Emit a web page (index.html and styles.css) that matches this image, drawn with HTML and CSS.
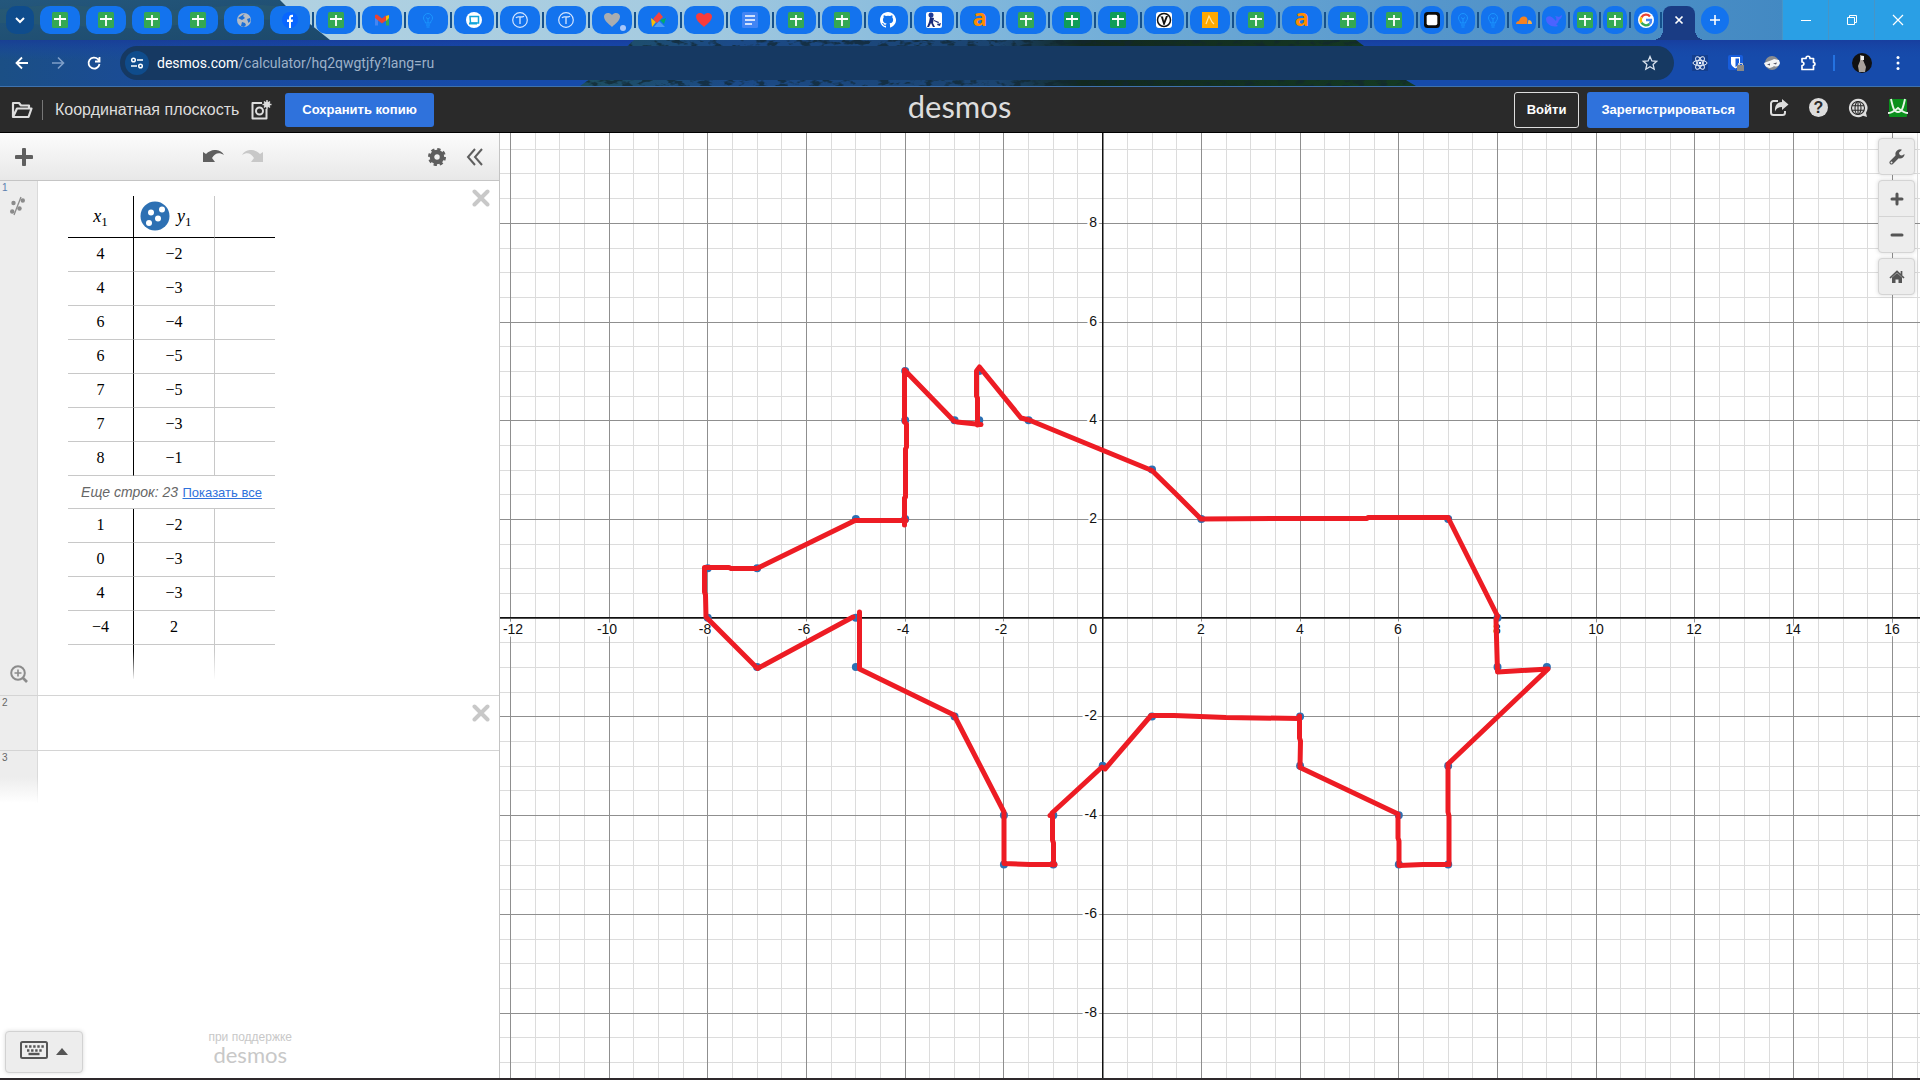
FILE: index.html
```html
<!DOCTYPE html>
<html lang="ru">
<head>
<meta charset="utf-8">
<meta name="viewport" content="width=device-width, initial-scale=1">
<title>Координатная плоскость</title>
<link rel="stylesheet" href="styles.css">
</head>
<body>
<svg class="symbols" aria-hidden="true">
  <symbol id="sheet" viewBox="0 0 16 16"><rect width="16" height="16" rx="1.500" fill="#34a853"/><path d="M2 7h12M8 3v11" stroke="#fff" stroke-width="1.800"/></symbol>
  <symbol id="sheet-dark" viewBox="0 0 16 16"><rect width="16" height="16" rx="1.500" fill="#0f9d58"/><path d="M2 7h12M8 3v11" stroke="#fff" stroke-width="1.800"/></symbol>
  <symbol id="globe" viewBox="0 0 16 16"><circle cx="8" cy="8" r="7" fill="#b4bcc6"/><path d="M9 1.500 7 4l2 2-3 2-4-2M5 14l1-4 3 1 1 2-2 2M11 7l3-1 .5 3-2 2z" fill="#1a6fd8"/></symbol>
  <symbol id="fb" viewBox="0 0 16 16"><circle cx="8" cy="8" r="8" fill="#0866ff"/><path d="M7 16v-6H5V7.500h2V6c0-2.500 1.200-3.600 4-3.300V5c-1.500-.1-2 .1-2 1.200v1.300h2L10.700 10H9v6z" fill="#fff"/></symbol>
  <symbol id="gmail" viewBox="0 0 16 16"><path d="M1 5v8.500h3V7z" fill="#4285f4"/><path d="M15 5v8.500h-3V7z" fill="#34a853"/><path d="M12 4l3-1v3l-3 3z" fill="#fbbc04"/><path d="M1 3l2-.5L8 6.500 12 3.200V8.500L8 11.500 1 6z" fill="#ea4335"/></symbol>
  <symbol id="bulb" viewBox="0 0 16 16"><path d="M5.500 11c0-2-2-2.500-2-5a4.500 4.500 0 0 1 9 0c0 2.500-2 3-2 5zM6 13h4M6.500 15h3M8 11V7L6 5.500M8 7l2-1.500" fill="none" stroke="#1b96ff"/></symbol>
  <symbol id="board" viewBox="0 0 16 16"><circle cx="8" cy="8" r="8" fill="#fff"/><path d="M4 4.500h8.500v6.500H4.500z" fill="#fff" stroke="#12a5dc" stroke-width="1.500"/><path d="M3 11.500h8" stroke="#12a5dc" stroke-width="2"/></symbol>
  <symbol id="tau" viewBox="0 0 16 16"><circle cx="8" cy="8" r="7.300" fill="none" stroke="#d4e5ff" stroke-width="1.200"/><path d="M4 6c1-2 3-1 4-1s3 0 4-.8M8 5v7" fill="none" stroke="#d4e5ff" stroke-width="1.300"/></symbol>
  <symbol id="heart" viewBox="0 0 16 16"><path d="M8 15C5 12 0 9 0 4.500 0 1 5-.500 8 3c3-3.500 8-2 8 1.500C16 9 11 12 8 15z" fill="currentColor"/></symbol>
  <symbol id="diamond" viewBox="0 0 16 16"><path d="M4 15l5-6 6 6z" fill="#4c9bf5"/><path d="M1 6l5 4-4 5z" fill="#fbbc04"/><path d="M16 6l-2 6-4-4z" fill="#00ac68"/><path d="M9 0 3 7l4 4 6-6z" fill="#f4443e"/></symbol>
  <symbol id="docs" viewBox="0 0 16 16"><rect width="16" height="16" rx="1.500" fill="#4285f4"/><path d="M3 4h10M3 8h10M3 12h7" stroke="#fff" stroke-width="1.600"/></symbol>
  <symbol id="github" viewBox="0 0 16 16"><path fill="#fff" d="M8 0C3.580 0 0 3.580 0 8c0 3.540 2.290 6.530 5.470 7.590.4.070.55-.17.55-.38v-1.500c-2.010.37-2.530-.49-2.690-.94-.09-.23-.48-.94-.82-1.130-.28-.15-.68-.52-.01-.53.63-.01 1.080.58 1.230.82.72 1.210 1.870.87 2.330.66.070-.52.28-.87.510-1.070-1.780-.2-3.640-.89-3.640-3.950 0-.87.310-1.590.82-2.150-.08-.2-.36-1.020.08-2.120 0 0 .67-.21 2.200.82a7.400 7.400 0 0 1 4 0c1.530-1.040 2.200-.82 2.200-.82.44 1.100.16 1.920.08 2.120.51.56.82 1.270.82 2.150 0 3.070-1.870 3.750-3.650 3.950.29.25.54.73.54 1.480v2.200c0 .21.15.46.55.38A8 8 0 0 0 8 0z"/></symbol>
  <symbol id="painter" viewBox="0 0 16 16"><rect width="16" height="16" rx="2" fill="#fff"/><circle cx="5" cy="3" r="2.500" fill="#1f3a93"/><path d="M4 5l4 1-1 5 2 4H7l-2-4-2 4H1l2-5zM8 8l5 2-1 2 3-1-1 3-3-1 1-2-4-2z" fill="#1b2c7a"/></symbol>
  <symbol id="vring" viewBox="0 0 16 16"><rect width="16" height="16" rx="3" fill="#fff"/><circle cx="8" cy="8" r="6.500" fill="none" stroke="#111" stroke-width="1.500"/><path d="M3.500 4.500h3.500L8 9l2-5h2L8.500 13h-1L5 5" fill="#111"/></symbol>
  <symbol id="peak" viewBox="0 0 16 16"><rect width="16" height="16" fill="#ffa800"/><path d="M4 12 7 4l3 6 2 2" fill="none" stroke="#ffe3a0" stroke-width="1.200"/></symbol>
  <symbol id="frame" viewBox="0 0 18 18"><rect width="18" height="18" rx="4" fill="#0b0b0b"/><rect x="3" y="3" width="12" height="12" rx="2" fill="#fff"/></symbol>
  <symbol id="cloud" viewBox="0 0 16 16"><path d="M0 12c0-2 1.500-3 3-3C3.500 6 6 4 8.500 4.500 11 5 11.500 7 11.500 8L11 12z" fill="#f6821f"/><path d="M11.500 12 12.500 8c2 0 3.500 1.500 3.500 4z" fill="#fbad41"/></symbol>
  <symbol id="whale" viewBox="0 0 16 16"><path d="M0 7c0-3 4-4 7-1l3 3c1-2 0-4-1-5 2 0 3 1 4 1l3-2c0 3-2 4-3 5-1 3-2 4-3 4l2 2c-6 2-12-2-12-7z" fill="#4b63ff"/></symbol>
  <symbol id="google" viewBox="0 0 16 16"><circle cx="8" cy="8" r="8" fill="#fff"/><g fill="none" stroke-width="2.400"><path d="M12 4.500A5.200 5.200 0 0 0 3.500 5.300" stroke="#ea4335"/><path d="M3.500 5.300a5.200 5.200 0 0 0 0 5.400" stroke="#fbbc04"/><path d="M3.500 10.700A5.200 5.200 0 0 0 11.500 12" stroke="#34a853"/><path d="M11.500 12A5 5 0 0 0 13 8H8" stroke="#4285f4"/></g></symbol>
  <symbol id="cross" viewBox="0 0 18 18"><path d="M2.500 2.500l13 13M15.500 2.500l-13 13" stroke="currentColor" stroke-width="4" stroke-linecap="round"/></symbol>
</svg>

<header class="browser">
  <div class="tab-strip">
    <svg class="wallpaper" viewBox="0 0 1920 40" preserveAspectRatio="none" aria-hidden="true">
      <defs>
        <linearGradient id="sky"><stop offset="0" stop-color="#b9d6e2"/><stop offset=".35" stop-color="#a5cbe0"/><stop offset=".55" stop-color="#78b2da"/><stop offset=".75" stop-color="#5596cb"/><stop offset="1" stop-color="#3c84bf"/></linearGradient>
        <linearGradient id="hill" x2="1" y2="1"><stop offset="0" stop-color="#24577c"/><stop offset="1" stop-color="#1c496b"/></linearGradient>
      </defs>
      <rect width="1920" height="40" fill="url(#sky)"/>
      <path d="M0 0h280l10 10 20 14 20 16H0z" fill="url(#hill)"/>
      <path d="M0 9l60-5 90 8 100-8 35 3 15 13-75-1-80 10-145-6z" fill="#2a5a70" opacity=".6"/>
    </svg>
    <button class="tab tab-search" aria-label="Поиск вкладок"><svg width="12" height="12" viewBox="0 0 12 12"><path d="M2 4l4 4 4-4" fill="none" stroke="#fff" stroke-width="2"/></svg></button>
    <div class="tabs">
      <button class="tab" aria-label="Вкладка"><svg><use href="#sheet"/></svg></button>
      <button class="tab" aria-label="Вкладка"><svg><use href="#sheet"/></svg></button>
      <button class="tab" aria-label="Вкладка"><svg><use href="#sheet"/></svg></button>
      <button class="tab" aria-label="Вкладка"><svg><use href="#sheet"/></svg></button>
      <button class="tab" aria-label="Вкладка"><svg><use href="#globe"/></svg></button>
      <button class="tab" aria-label="Вкладка"><svg><use href="#fb"/></svg></button>
      <button class="tab" aria-label="Вкладка"><svg><use href="#sheet"/></svg></button>
      <button class="tab" aria-label="Вкладка"><svg><use href="#gmail"/></svg></button>
      <button class="tab" aria-label="Вкладка"><svg><use href="#bulb"/></svg></button>
      <button class="tab" aria-label="Вкладка"><svg><use href="#board"/></svg></button>
      <button class="tab" aria-label="Вкладка"><svg><use href="#tau"/></svg></button>
      <button class="tab" aria-label="Вкладка"><svg><use href="#tau"/></svg></button>
      <button class="tab tab-muted" aria-label="Вкладка"><svg><use href="#heart"/></svg></button>
      <button class="tab" aria-label="Вкладка"><svg><use href="#diamond"/></svg></button>
      <button class="tab tab-red" aria-label="Вкладка"><svg><use href="#heart"/></svg></button>
      <button class="tab" aria-label="Вкладка"><svg><use href="#docs"/></svg></button>
      <button class="tab" aria-label="Вкладка"><svg><use href="#sheet"/></svg></button>
      <button class="tab" aria-label="Вкладка"><svg><use href="#sheet"/></svg></button>
      <button class="tab" aria-label="Вкладка"><svg><use href="#github"/></svg></button>
      <button class="tab" aria-label="Вкладка"><svg><use href="#painter"/></svg></button>
      <button class="tab tab-letter" aria-label="Вкладка">a</button>
      <button class="tab" aria-label="Вкладка"><svg><use href="#sheet"/></svg></button>
      <button class="tab" aria-label="Вкладка"><svg><use href="#sheet-dark"/></svg></button>
      <button class="tab" aria-label="Вкладка"><svg><use href="#sheet-dark"/></svg></button>
      <button class="tab" aria-label="Вкладка"><svg><use href="#vring"/></svg></button>
      <button class="tab" aria-label="Вкладка"><svg><use href="#peak"/></svg></button>
      <button class="tab" aria-label="Вкладка"><svg><use href="#sheet"/></svg></button>
      <button class="tab tab-letter" aria-label="Вкладка">a</button>
      <button class="tab" aria-label="Вкладка"><svg><use href="#sheet"/></svg></button>
      <button class="tab" aria-label="Вкладка"><svg><use href="#sheet"/></svg></button>
    </div>
    <div class="tabs tabs-small">
      <button class="tab" aria-label="Вкладка"><svg><use href="#frame"/></svg></button>
      <button class="tab" aria-label="Вкладка"><svg><use href="#bulb"/></svg></button>
      <button class="tab" aria-label="Вкладка"><svg><use href="#bulb"/></svg></button>
      <button class="tab" aria-label="Вкладка"><svg><use href="#cloud"/></svg></button>
      <button class="tab" aria-label="Вкладка"><svg><use href="#whale"/></svg></button>
      <button class="tab" aria-label="Вкладка"><svg><use href="#sheet"/></svg></button>
      <button class="tab" aria-label="Вкладка"><svg><use href="#sheet"/></svg></button>
      <button class="tab" aria-label="Вкладка"><svg><use href="#google"/></svg></button>
    </div>
    <button class="tab-active" aria-label="Закрыть вкладку"><svg width="10" height="10" viewBox="0 0 10 10"><path d="M1.500 1.500l7 7M8.500 1.500l-7 7" stroke="#fff" stroke-width="1.700"/></svg></button>
    <button class="tab tab-new" aria-label="Новая вкладка"><svg width="12" height="12" viewBox="0 0 12 12"><path d="M6 1v10M1 6h10" stroke="#fff" stroke-width="1.600"/></svg></button>
    <div class="window-buttons">
      <button aria-label="Свернуть"><svg viewBox="0 0 12 12"><path d="M1 6.500h10" stroke="#fff"/></svg></button>
      <button aria-label="Развернуть"><svg viewBox="0 0 12 12"><path d="M1.500 3.500h7v7h-7zM3.500 3.500v-2h7v7h-2" fill="none" stroke="#fff"/></svg></button>
      <button aria-label="Закрыть"><svg viewBox="0 0 12 12"><path d="M1 1l10 10M11 1L1 11" stroke="#fff" stroke-width="1.200"/></svg></button>
    </div>
  </div>
  <div class="address-row">
    <svg class="wallpaper" viewBox="0 0 1920 46" preserveAspectRatio="none" aria-hidden="true">
      <defs>
        <linearGradient id="water" x1="0" x2="1"><stop offset="0" stop-color="#1b4f85"/><stop offset=".1" stop-color="#1a4a9c"/><stop offset=".25" stop-color="#164bab"/><stop offset="1" stop-color="#164bab"/></linearGradient>
        <linearGradient id="trees"><stop offset="0" stop-color="#1e4f5e"/><stop offset=".18" stop-color="#1b4a88"/><stop offset=".5" stop-color="#1b4470"/><stop offset=".6" stop-color="#12281f"/><stop offset="1" stop-color="#143a22"/></linearGradient>
        <linearGradient id="shade" x2="0" y2="1"><stop offset="0" stop-color="#18399a" stop-opacity=".7"/><stop offset="1" stop-color="#164bab" stop-opacity="0"/></linearGradient>
        <filter id="leaves" x="0" y="0" width="1" height="1" color-interpolation-filters="sRGB"><feTurbulence type="fractalNoise" baseFrequency=".09 .2" numOctaves="3" seed="4"/><feColorMatrix values="0 0 0 0 .07  0 0 0 0 .15  0 0 0 0 .18  6 0 0 0 -3"/><feComposite in2="SourceGraphic" operator="in"/></filter>
      </defs>
      <rect width="1920" height="46" fill="url(#water)"/>
      <rect width="1920" height="20" fill="url(#shade)"/>
      <path d="M580 46l20-14 34-32h722l16 12 20 20 24 14z" fill="url(#trees)"/>
      <path d="M580 46l20-14 34-32h722l16 12 20 20 24 14z" filter="url(#leaves)" opacity=".7"/>
    </svg>
    <button class="nav" aria-label="Назад"><svg viewBox="0 0 16 16"><path d="M14 8H3M8 2.500 2.500 8 8 13.500" fill="none" stroke="#fff" stroke-width="1.800"/></svg></button>
    <button class="nav" aria-label="Вперёд"><svg viewBox="0 0 16 16"><path d="M2 8h11M8 2.500 13.500 8 8 13.500" fill="none" stroke="#7f9fc9" stroke-width="1.600"/></svg></button>
    <button class="nav" aria-label="Обновить"><svg viewBox="0 0 16 16"><path d="M13.500 9A5.500 5.500 0 1 1 12 4.200L13.500 6M13.500 2v4.500H9" fill="none" stroke="#fff" stroke-width="1.800"/></svg></button>
    <div class="omnibox">
      <button class="site-info" aria-label="Сведения о сайте"><svg viewBox="0 0 14 14"><g fill="none" stroke="#fff" stroke-width="1.500"><circle cx="3.500" cy="4" r="1.800"/><path d="M7 4h6M1 10h6"/><circle cx="10.500" cy="10" r="1.800"/></g></svg></button>
      <div class="url" role="textbox" aria-label="Адрес"><b>desmos.com</b>/calculator/hq2qwgtjfy?lang=ru</div>
      <button class="star" aria-label="В закладки"><svg viewBox="0 0 16 16"><path d="M8 1.500l1.900 4.400 4.800.4-3.600 3.200 1.100 4.700L8 11.700l-4.200 2.500 1.100-4.700L1.300 6.300l4.800-.4z" fill="none" stroke="#d9e2ee" stroke-width="1.300"/></svg></button>
    </div>
    <div class="extensions">
      <button aria-label="React"><svg viewBox="0 0 16 16"><rect width="16" height="16" fill="#143f8f"/><g fill="none" stroke="#e6edf7"><ellipse cx="8" cy="8" rx="7" ry="2.700"/><ellipse cx="8" cy="8" rx="7" ry="2.700" transform="rotate(60 8 8)"/><ellipse cx="8" cy="8" rx="7" ry="2.700" transform="rotate(120 8 8)"/></g><circle cx="8" cy="8" r="1.300" fill="#fff"/></svg></button>
      <button aria-label="Пароли"><svg viewBox="0 0 16 16"><rect width="15" height="15" rx="2" fill="#175ddc"/><path d="M3 2h9v6c0 3-3 4.500-4.500 5.500C6 12.500 3 11 3 8z" fill="#fff"/><path d="M7.500 3.500H11V8c0 2-2 3.300-3.500 4z" fill="#175ddc"/><rect x="9" y="10" width="7" height="6" fill="#888"/><path d="M10.500 10V8.500h4V10" fill="none" stroke="#ccc"/></svg></button>
      <button aria-label="Инкогнито"><svg viewBox="0 0 16 16"><circle cx="8" cy="8" r="7" fill="#8a8d91"/><path d="M0 8c3-1 8-3 10-4l5 1 1 3c-1 4-4 4-6 3-2 2-8 4-10-3z" fill="#f4f4f4"/><path d="M3 9.500l3-1v2zM9 8.500l4-1-1 2z" fill="#556"/></svg></button>
      <button aria-label="Расширения"><svg viewBox="0 0 16 16"><path d="M2 3.500h4c0-3 4-3 4 0h3.500v4c2 0 2 3 0 3v4H2v-4c2.500 0 2.500-3.500 0-3.500z" fill="none" stroke="#fff" stroke-width="1.700" stroke-linejoin="round"/></svg></button>
      <i class="divider"></i>
      <button class="avatar" aria-label="Профиль"><svg viewBox="0 0 20 20"><circle cx="10" cy="10" r="10" fill="#111"/><path d="M8 2l4 1-1 4 3 7-1 5H7L6 13l2-5z" fill="#a9a29b"/><path d="M9 3h3v4H9z" fill="#eee"/></svg></button>
      <button aria-label="Меню"><svg viewBox="0 0 16 16" fill="#fff"><circle cx="8" cy="2.500" r="1.500"/><circle cx="8" cy="8" r="1.500"/><circle cx="8" cy="13.500" r="1.500"/></svg></button>
    </div>
  </div>
</header>

<header class="app-bar">
  <div class="bar-left">
    <button class="icon-button" aria-label="Открыть"><svg width="22" height="18" viewBox="0 0 22 18"><path d="M2 16V2h6l2 2.500h8V7M2 16 6 7.500h14.500L17.500 16z" fill="none" stroke="#ddd" stroke-width="2.200" stroke-linejoin="round"/></svg></button>
    <i class="rule"></i>
    <span class="graph-title">Координатная плоскость</span>
    <button class="icon-button" aria-label="Снимок"><svg width="22" height="20" viewBox="0 0 22 20"><path d="M12 3H2.500v15.500h14V9" fill="none" stroke="#ddd" stroke-width="2" stroke-linejoin="round"/><circle cx="9.500" cy="11" r="3.500" fill="none" stroke="#ddd" stroke-width="2"/><circle cx="17" cy="4.500" r="3" fill="#ddd"/><path d="M17 0v9M12.500 4.500h9M14 1.500l6 6M20 1.500l-6 6" stroke="#ddd" stroke-width="1.400"/></svg></button>
    <button class="button primary">Сохранить копию</button>
  </div>
  <a class="logo" href="#">desmos</a>
  <div class="bar-right">
    <button class="button outline">Войти</button>
    <button class="button primary">Зарегистрироваться</button>
    <div class="bar-icons">
      <button class="icon-button" aria-label="Поделиться"><svg width="20" height="20" viewBox="0 0 20 20"><path d="M9 3H4.500A2.500 2.500 0 0 0 2 5.500v9A2.500 2.500 0 0 0 4.500 17h9a2.500 2.500 0 0 0 2.500-2.500V13" fill="none" stroke="#ddd" stroke-width="2"/><path d="M19.500 6.500 13 1v3C8 4 5.500 8 6 13.500 7.500 10 9.500 9 13 9v3z" fill="#ddd"/></svg></button>
      <button class="icon-button help" aria-label="Справка">?</button>
      <button class="icon-button" aria-label="Язык"><svg width="20" height="20" viewBox="0 0 20 20"><path d="M10 .8a9.200 9.200 0 1 0 5 17l4 1.200-1-4A9.200 9.200 0 0 0 10 .8z" fill="#ddd"/><g fill="none" stroke="#2a2a2a" stroke-width="1.100"><circle cx="10" cy="10" r="6.500"/><ellipse cx="10" cy="10" rx="3" ry="6.500"/><path d="M4 7.700h12M4 12.300h12M10 3.500v13"/></g></svg></button>
      <button class="icon-button" aria-label="Изображение"><svg width="20" height="20" viewBox="0 0 20 20"><rect x="1" y="1" width="18" height="18" rx="1" fill="#0a8f1c"/><path d="M3 1c2 9 3 13 7 13s5-4 7-13M0 15c4 0 6-2 10-5 4 3 6 5 10 5" fill="none" stroke="#e8f5e8" stroke-width="1.900"/></svg></button>
    </div>
  </div>
</header>

<main class="workspace">
  <aside class="panel">
    <div class="panel-tools">
      <button class="icon-button" aria-label="Добавить"><svg width="18" height="18" viewBox="0 0 18 18"><path d="M9 1.500v15M1.500 9h15" stroke="#5f5f5f" stroke-width="4" stroke-linecap="round"/></svg></button>
      <div class="history">
        <button class="icon-button" aria-label="Отменить"><svg width="22" height="14" viewBox="0 0 22 14"><path d="M0 2l3 2c6-6 15-5 18 1-5-3-9-2-12 3l3 4H0z" fill="#5f5f5f"/></svg></button>
        <button class="icon-button" aria-label="Повторить"><svg width="22" height="14" viewBox="0 0 22 14"><path d="M22 2l-3 2C13-2 4-1 1 5c5-3 9-2 12 3l-3 4h12z" fill="#c8c8c8"/></svg></button>
      </div>
      <div class="panel-right">
        <button class="icon-button" aria-label="Настройки"><svg width="18" height="18" viewBox="0 0 18 18"><circle cx="9" cy="9" r="5" fill="none" stroke="#5f5f5f" stroke-width="4.500"/><circle cx="9" cy="9" r="7.500" fill="none" stroke="#5f5f5f" stroke-width="3" stroke-dasharray="3.200 2.690"/></svg></button>
        <button class="icon-button" aria-label="Свернуть панель"><svg width="18" height="18" viewBox="0 0 18 18"><path d="M9 1 2 9l7 8M16 1 9 9l7 8" fill="none" stroke="#5f5f5f" stroke-width="2"/></svg></button>
      </div>
    </div>
    <section class="row row-table">
      <div class="gutter"><span>1</span>
        <svg class="mode" width="16" height="20" viewBox="0 0 16 20"><g fill="#8b8b8b"><circle cx="3.500" cy="7" r="2.200"/><circle cx="12.800" cy="4.500" r="2.200"/><circle cx="9.500" cy="12.500" r="2.200"/><circle cx="2.200" cy="15.500" r="2.200"/></g><path d="M11 1 4 19" stroke="#8b8b8b" stroke-width="1.300"/></svg>
        <button class="icon-button zoom-fit" aria-label="Масштабировать"><svg width="18" height="18" viewBox="0 0 18 18"><circle cx="8" cy="8" r="6.800" fill="none" stroke="#8b8b8b" stroke-width="2"/><path d="M8 4.500v7M4.500 8h7" stroke="#8b8b8b" stroke-width="1.600"/><path d="M13 13l4 4" stroke="#8b8b8b" stroke-width="2.600"/></svg></button>
      </div>
      <div class="row-body">
        <table class="data">
          <thead><tr><th><i>x</i><sub>1</sub></th><th><div class="head-y"><svg width="30" height="30" viewBox="0 0 30 30"><circle cx="15" cy="15" r="14.500" fill="#2d70b3"/><g fill="#fff"><circle cx="11" cy="11.500" r="3"/><circle cx="22" cy="8.500" r="3"/><circle cx="18" cy="17.500" r="3"/><circle cx="9" cy="22" r="3"/></g></svg><span><i>y</i><sub>1</sub></span></div></th><th></th></tr></thead>
          <tbody>
            <tr><td>4</td><td>−2</td><td></td></tr>
            <tr><td>4</td><td>−3</td><td></td></tr>
            <tr><td>6</td><td>−4</td><td></td></tr>
            <tr><td>6</td><td>−5</td><td></td></tr>
            <tr><td>7</td><td>−5</td><td></td></tr>
            <tr><td>7</td><td>−3</td><td></td></tr>
            <tr><td>8</td><td>−1</td><td></td></tr>
            <tr class="more"><td colspan="3"><em>Еще строк: 23</em> <a href="#">Показать все</a></td></tr>
            <tr><td>1</td><td>−2</td><td></td></tr>
            <tr><td>0</td><td>−3</td><td></td></tr>
            <tr><td>4</td><td>−3</td><td></td></tr>
            <tr><td>−4</td><td>2</td><td></td></tr>
            <tr class="fade"><td></td><td></td><td></td></tr>
          </tbody>
        </table>
        <button class="icon-button remove" aria-label="Удалить"><svg width="18" height="18"><use href="#cross"/></svg></button>
      </div>
    </section>
    <section class="row row-empty">
      <div class="gutter"><span>2</span></div>
      <div class="row-body"><button class="icon-button remove" aria-label="Удалить"><svg width="18" height="18"><use href="#cross"/></svg></button></div>
    </section>
    <section class="row row-last"><div class="gutter"><span>3</span></div></section>
    <footer class="panel-footer">
      <button class="keypad" aria-label="Клавиатура"><svg width="28" height="18" viewBox="0 0 28 18"><rect x="1" y="1" width="26" height="16" rx="1.500" fill="none" stroke="#555" stroke-width="2"/><path d="M5 5.500h19" stroke="#555" stroke-width="2.400" stroke-dasharray="2.400 1.700"/><path d="M7 9.500h15" stroke="#555" stroke-width="2.400" stroke-dasharray="2.400 1.700"/><path d="M8.500 13h11" stroke="#555" stroke-width="2.400"/></svg><svg width="12" height="8" viewBox="0 0 12 8"><path d="M0 7 6 0l6 7z" fill="#555"/></svg></button>
      <div class="powered"><span>при поддержке</span><b>desmos</b></div>
    </footer>
  </aside>
  <section class="graph">
    <svg class="plot" role="img" aria-label="График">
      <g id="grid"></g>
      <g id="labels"></g>
      <g id="points"></g>
      <g id="sketch" transform="translate(-500 -133)">
        <path d="M704.500 567.500H729L731 568.500H757L855 520.500H906M904.500 525V498L905.500 497V449L906.500 447V424L904.500 422V370L954 421L957 422L981 424.500M977.500 425V398L976.500 396V371L979.500 367L1021 418L1029 420L1152 470.500L1176 494L1201 519L1280 518.500H1367L1368 517.500H1448L1497.500 616L1496 620L1497.500 672L1548 669L1448 764V812L1449 816V864.500H1423L1399 865.500V841L1398 838V814L1300 767.500L1300.500 741L1299.500 738V716M1299 718.500L1226 717.500L1174 715.500H1151L1105 769L1102 767L1076 791L1052 813M1050 815.500H1052.500V840L1053.500 843V865M1055 864.500H1030L1004 863.500V812L954 715L859.500 669V612M853 617L757.500 668.500L706 617L705.500 595L704.500 592V567.500"/>
      </g>
    </svg>
    <div class="graph-tools">
      <button class="tool" aria-label="Настройки графика"><svg width="16" height="16" viewBox="0 0 16 16"><path d="M2.500 13.500 9 7" stroke="#555" stroke-width="4" stroke-linecap="round"/><path d="M13 .8A4.600 4.600 0 1 0 15.600 5l-2.600 1.600-2.400-.6-.6-2.200z" fill="#555"/><circle cx="2.500" cy="13.500" r="1" fill="#ededed"/></svg></button>
      <div class="zoom-pair">
        <button class="tool" aria-label="Увеличить"><svg width="14" height="14" viewBox="0 0 14 14"><path d="M7 2v10M2 7h10" stroke="#555" stroke-width="3" stroke-linecap="round"/></svg></button>
        <button class="tool" aria-label="Уменьшить"><svg width="14" height="14" viewBox="0 0 14 14"><path d="M2 7h10" stroke="#555" stroke-width="3" stroke-linecap="round"/></svg></button>
      </div>
      <button class="tool" aria-label="Исходный вид"><svg width="16" height="16" viewBox="0 0 16 16"><path d="M8 4l5 4.500V14H9.500v-3.500h-3V14H3V8.500z" fill="#555"/><path d="M1 9l7-6.500L15 9M12.500 2v4" fill="none" stroke="#555" stroke-width="1.700"/></svg></button>
    </div>
  </section>
</main>
<footer class="taskbar"></footer>
<script src="graph.js"></script>
</body>
</html>
```
FILE: styles.css
```css
* { box-sizing: border-box; }
html, body { margin: 0; height: 100%; }
body {
  display: flex;
  flex-direction: column;
  min-height: 100vh;
  overflow: hidden;
  background: #fff;
  font-family: "Liberation Sans", Arial, sans-serif;
}
button { padding: 0; border: 0; background: none; font-family: inherit; cursor: pointer; }
svg { display: block; }
.symbols { position: absolute; width: 0; height: 0; }

/* browser frame */
.browser { flex: none; border-bottom: 1px solid #3f72ad; }
.tab-strip, .address-row { position: relative; display: flex; align-items: center; }
.wallpaper { position: absolute; inset: 0; width: 100%; height: 100%; }
.tab-strip { height: 40px; padding-left: 6px; }
.tab-strip > :not(.wallpaper), .address-row > :not(.wallpaper) { position: relative; }
.tabs { display: flex; gap: 6px; margin-left: 6px; }
.tab {
  display: flex;
  align-items: center;
  justify-content: center;
  position: relative;
  flex: none;
  width: 40px;
  height: 28px;
  border-radius: 10px;
  background: #1373ee;
}
.tabs .tab svg { width: 16px; height: 16px; }
.tabs .tab:nth-child(n+6)::after, .tabs-small .tab:not(:last-child)::after {
  content: "";
  position: absolute;
  top: 6px;
  right: -4px;
  width: 2px;
  height: 16px;
  background: #14508c;
}
.tab-search { width: 28px; background: #0f4c8c; }
.tab-muted { color: #a9adb1; }
.tab-red { color: #f83b3b; }
.tab-muted::before {
  content: "";
  position: absolute;
  right: 6px;
  bottom: 3px;
  width: 6px;
  height: 6px;
  border-radius: 50%;
  background: #a8c7fa;
}
.tab-letter { color: #ff8a00; font-family: "Noto Sans", sans-serif; font-size: 24px; font-weight: 700; line-height: 20px; padding-bottom: 6px; }
.tabs-small { justify-content: space-between; gap: 0; width: 238px; }
.tabs-small .tab { width: 24px; }
.tab-active {
  display: flex;
  align-items: center;
  justify-content: center;
  align-self: flex-end;
  width: 32px;
  height: 34px;
  margin: 0 6px 0 5px;
  padding-bottom: 6px;
  border-radius: 8px 8px 0 0;
  background: #1a3c84;
}
.tab-active::before, .tab-active::after {
  content: "";
  position: absolute;
  bottom: 0;
  width: 10px;
  height: 10px;
}
.tab-active::before { right: 100%; background: radial-gradient(circle at 0 0, transparent 10px, #1a3c84 10px); }
.tab-active::after { left: 100%; background: radial-gradient(circle at 100% 0, transparent 10px, #1a3c84 10px); }
.tab-new { width: 28px; border-radius: 14px; }
.window-buttons { display: flex; align-self: stretch; margin-left: auto; }
.window-buttons button { display: grid; place-items: center; width: 46px; background: #2a9fe5; border-left: 1px solid #4795c6; }
.window-buttons svg { width: 12px; height: 12px; }

.address-row { height: 46px; padding: 0 10px; }
.nav { display: grid; place-items: center; width: 24px; height: 24px; margin-right: 12px; }
.nav svg, .star svg, .extensions svg { width: 16px; height: 16px; }
.omnibox {
  display: flex;
  align-items: center;
  flex: 1;
  height: 34px;
  margin-left: 2px;
  padding: 0 16px 0 5px;
  border-radius: 17px;
  background: #163962;
}
.site-info { display: grid; place-items: center; width: 24px; height: 24px; border-radius: 50%; background: #0f4c8c; }
.site-info svg { width: 14px; height: 14px; }
.url { flex: 1; margin-left: 8px; color: #9db1c9; font-family: Roboto, "Noto Sans", sans-serif; font-size: 14px; }
.url b { color: #fff; font-weight: 400; }
.extensions { display: flex; align-items: center; gap: 20px; margin-left: 18px; padding-right: 4px; }
.extensions .divider { width: 2px; height: 16px; margin: 0 -3px; background: #2472e0; }
.extensions .avatar { margin-right: -2px; }
.extensions .avatar svg { width: 20px; height: 20px; }

/* application bar */
.app-bar {
  display: grid;
  grid-template-columns: 1fr auto 1fr;
  align-items: center;
  flex: none;
  height: 46px;
  padding: 0 12px 0 11px;
  border-bottom: 1px solid #000;
  background: #2a2a2a;
}
.bar-left, .bar-right, .bar-icons { display: flex; align-items: center; }
.rule { width: 1px; height: 20px; margin: 0 12px 0 9px; background: #777; }
.graph-title { margin-right: 11px; color: #ddd; font-size: 16px; }
.bar-left .primary { margin-left: 13px; }
.button { height: 34px; padding: 0 17px; border-radius: 3px; color: #fff; font-size: 13px; font-weight: 700; }
.primary { background: #2f72dc; }
.outline { height: 36px; border: 1px solid #ddd; }
.logo { color: #ddd; font-family: Lato, sans-serif; font-size: 31px; line-height: 36px; text-decoration: none; padding-bottom: 8px; }
.bar-right { justify-content: flex-end; gap: 8px; }
.bar-right .button { height: 36px; padding: 0 12px; }
.bar-right .primary { padding: 0 14px; }
.bar-icons { gap: 20px; margin: 0 0 4px 12px; }
.help { width: 19px; height: 19px; border-radius: 50%; background: #ddd; color: #2a2a2a; font-size: 16px; font-weight: 700; line-height: 19px; }

/* expressions */
.workspace { display: flex; flex: 1; min-height: 0; }
.panel { display: flex; flex-direction: column; flex: none; width: 500px; border-right: 1px solid #c4c4c4; }
.panel-tools {
  display: grid;
  grid-template-columns: 1fr auto 1fr;
  align-items: center;
  height: 48px;
  padding: 0 15px;
  border-bottom: 1px solid #c5c5c5;
  background: linear-gradient(#fcfcfc, #e8e8e8);
}
.panel-tools > button { justify-self: start; }
.history { display: flex; gap: 16px; margin-right: 34px; }
.panel-right { display: flex; justify-content: flex-end; gap: 20px; }
.row { display: flex; border-bottom: 1px solid #d4d4d4; }
.gutter {
  display: flex;
  flex-direction: column;
  align-items: center;
  flex: none;
  width: 38px;
  border-right: 1px solid #dadada;
  background: #ededed;
}
.gutter span { align-self: flex-start; margin: 1px 2px 2px; color: #666; font-size: 10px; line-height: 12px; }
.row-table .gutter { padding-bottom: 12px; }
.row-table .gutter span { color: #5b7fb0; }
.mode { margin-right: 1px; }
.zoom-fit { margin-top: auto; }
.row-body { display: flex; flex: 1; justify-content: space-between; align-items: flex-start; padding: 8px 9px 0 0; }
.row-empty { height: 55px; }
.remove { margin-left: auto; color: #c8c8c8; }
.row-last { height: 52px; border: 0; }
.row-last .gutter { background: linear-gradient(#ededed 50%, #fff); border-image: linear-gradient(#dadada 50%, #fff) 1; }

.data { width: 207px; margin: 7px 0 16px 30px; border-spacing: 0; table-layout: fixed; font-family: "Liberation Serif", "Times New Roman", serif; font-size: 16px; }
.data th, .data td { height: 34px; padding: 0 0 2px; border-bottom: 1px solid #c8c8c8; text-align: center; font-weight: 400; line-height: 20px; }
.data th { height: 42px; border-bottom-color: #000; font-size: 18px; }
.data th:first-child, .data tr:not(.more) td:first-child { width: 66px; border-right: 1px solid #000; }
.data th:nth-child(2), .data td:nth-child(2) { width: 81px; border-right: 1px solid #c8c8c8; }
.data sub { font-size: 13px; line-height: 0; vertical-align: -4px; }
.head-y { display: flex; align-items: center; gap: 7px; padding-left: 6px; }
.data .more td { height: 33px; padding: 0; font-family: "Liberation Sans", Arial, sans-serif; }
.more em { color: #666; font-size: 14px; }
.more a { color: #2f72dc; font-size: 13px; }
.data .fade td { border-bottom: 0; }
.data tr.fade td:first-child { border-image: linear-gradient(#000 20%, transparent) 1; }
.data tr.fade td:nth-child(2) { border-image: linear-gradient(#c8c8c8 20%, transparent) 1; }

.panel-footer { display: flex; align-items: flex-start; justify-content: space-between; margin-top: auto; padding: 0 207px 5px 5px; }
.keypad {
  display: flex;
  align-items: flex-start;
  gap: 8px;
  width: 78px;
  height: 42px;
  padding: 9px 14px;
  border: 1px solid #d2d2d2;
  border-radius: 4px;
  background: #ededed;
  box-shadow: 0 0 4px rgba(0, 0, 0, .15);
}
.keypad svg + svg { margin-top: 7px; }
.powered { display: flex; flex-direction: column; align-items: center; color: #c8c8c8; font-size: 12px; line-height: 13px; }
.powered b { font-family: Lato, sans-serif; font-size: 22px; font-weight: 400; line-height: 22px; }

/* graph */
.graph { position: relative; flex: 1; min-width: 0; overflow: hidden; }
.plot { position: absolute; inset: 0; width: 100%; height: 100%; }
.minor { fill: #dcdcdc; }
.major { fill: #8f8f8f; }
.axis { fill: #111; }
#labels text { fill: #111; stroke: #fff; stroke-width: 5px; stroke-linejoin: round; paint-order: stroke; font-size: 14px; }
#points circle { fill: #2d70b3; }
#sketch path { fill: none; stroke: #ed1c24; stroke-width: 5; stroke-linejoin: round; stroke-linecap: round; }
.graph-tools { position: absolute; top: 5px; right: 5px; display: flex; flex-direction: column; gap: 5px; }
.tool, .zoom-pair { border: 1px solid #d4d4d4; border-radius: 4px; background: #ededed; box-shadow: 0 0 4px rgba(0, 0, 0, .15); }
.tool { display: grid; place-items: center; width: 37px; height: 37px; }
.zoom-pair .tool { width: 35px; height: 35px; border: 0; border-radius: 0; box-shadow: none; background: none; }
.zoom-pair .tool + .tool { height: 36px; border-top: 1px solid #d4d4d4; }

.taskbar { flex: none; height: 2px; background: #2e292c; }
```
FILE: graph.js
```js
const NS = 'http://www.w3.org/2000/svg';
const plot = document.querySelector('.plot');
const grid = document.getElementById('grid');
const labels = document.getElementById('labels');
const points = document.getElementById('points');
const origin = { x: 602.65, y: 484.7 };
const unit = 49.36;

const data = [
  [4, -2], [4, -3], [6, -4], [6, -5], [7, -5], [7, -3], [9, -1], [8, -1], [8, 0], [7, 2], [2, 2],
  [1, 3], [-1.5, 4], [-2.5, 5], [-2.5, 4], [-3, 4], [-4, 5], [-4, 4], [-4, 2], [-5, 2], [-7, 1],
  [-8, 1], [-8, 0], [-7, -1], [-5, 0], [-5, -1], [-3, -2], [-2, -4], [-2, -5], [-1, -5], [-1, -4],
  [0, -3], [1, -2]
];

function add(parent, name, attrs, text) {
  const el = document.createElementNS(NS, name);
  for (const key in attrs) el.setAttribute(key, attrs[key]);
  if (text !== undefined) el.textContent = text;
  parent.appendChild(el);
}

function px(v) { return Math.floor(origin.x + v * unit); }
function py(v) { return Math.round(origin.y - v * unit); }

function draw() {
  const { width, height } = plot.getBoundingClientRect();
  for (const g of [grid, labels, points]) g.replaceChildren();
  const left = Math.ceil(-origin.x / unit * 2), right = Math.floor((width - origin.x) / unit * 2);
  const top = Math.floor(origin.y / unit * 2), bottom = Math.ceil((origin.y - height) / unit * 2);
  for (const kind of ['minor', 'major']) {
    for (let i = left; i <= right; i++) {
      if ((i % 4 === 0) === (kind === 'major')) add(grid, 'rect', { class: kind, x: px(i / 2), y: 0, width: 1, height });
    }
    for (let i = bottom; i <= top; i++) {
      if ((i % 4 === 0) === (kind === 'major')) add(grid, 'rect', { class: kind, x: 0, y: py(i / 2), width, height: 1 });
    }
  }
  add(grid, 'rect', { class: 'axis', x: px(0), y: 0, width: 1.5, height });
  add(grid, 'rect', { class: 'axis', x: 0, y: py(0) - 1, width, height: 1.5 });
  for (let i = left; i <= right; i++) {
    if (i % 4 || i === 0) continue;
    const v = i / 2;
    const x = Math.max(px(v) - (v < 0 ? 2 : 0), 13);
    add(labels, 'text', { x, y: py(0) + 16, 'text-anchor': 'middle' }, v);
  }
  add(labels, 'text', { x: px(0) - 5, y: py(0) + 16, 'text-anchor': 'end' }, 0);
  for (let i = bottom; i <= top; i++) {
    if (i % 4 || i === 0) continue;
    add(labels, 'text', { x: px(0) - 5, y: py(i / 2) + 4, 'text-anchor': 'end' }, i / 2);
  }
  for (const [x, y] of data) add(points, 'circle', { cx: origin.x + x * unit, cy: origin.y - y * unit, r: 4 });
}

draw();
window.addEventListener('resize', draw);
```
